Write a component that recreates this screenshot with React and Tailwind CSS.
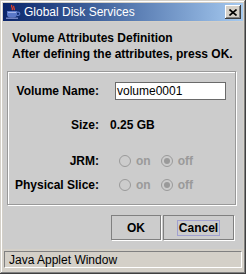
const font = { fontFamily: '"Liberation Sans", Arial, sans-serif' };

const JavaCup = () => (
  <svg width="16" height="16" viewBox="0 0 16 16">
    <path d="M7 1c-2 2 2 3 0 5M9 2c-1.5 1.5 1.5 2.5 0 4" stroke="#e8402a" strokeWidth="1.3" fill="none" />
    <path d="M2 7h10v3.5c0 2-1.5 3-3.5 3h-3C3.5 13.5 2 12.5 2 10.5z" fill="#5a78c8" />
    <path d="M3 8h8v1H3z" fill="#9fb2e8" />
    <path d="M12 8.2h1.2a1.6 1.6 0 010 3.2H12" stroke="#5a78c8" strokeWidth="1.2" fill="none" />
    <path d="M1 14.2h12" stroke="#8a9ad8" strokeWidth="1.2" />
  </svg>
);

const Radio = ({ checked, label }) => (
  <div className="flex items-center">
    <div className="w-[12px] h-[12px] rounded-full border border-[#9a9a9a] flex items-center justify-center">
      {checked && <div className="w-[6px] h-[6px] rounded-full bg-[#9a9a9a]" />}
    </div>
    <span className="ml-[5px] text-[12px] font-bold text-[#9a9a9a] leading-none">{label}</span>
  </div>
);

const RadioRow = ({ label, className }) => (
  <div className={`flex items-center h-[18px] ${className}`}>
    <span className="w-[90px] text-right font-bold text-[12px] text-black">{label}</span>
    <div className="ml-[20px] flex items-center gap-[10px]">
      <Radio label="on" />
      <Radio checked label="off" />
    </div>
  </div>
);

export default function App() {
  return (
    <div
      style={font}
      className="w-[246px] h-[274px] bg-[#d4d0c8] p-[3px] flex flex-col shadow-[inset_-1px_-1px_0_#404040,inset_1px_1px_0_#d4d0c8,inset_-2px_-2px_0_#808080,inset_2px_2px_0_#ffffff]"
    >
      <div className="h-[18px] flex items-center bg-gradient-to-r from-[#0a246a] to-[#a6caf0] pl-[2px] pr-[2px]">
        <JavaCup />
        <span className="ml-[3px] text-[12px] text-white leading-none flex-1">Global Disk Services</span>
        <div className="w-[16px] h-[14px] bg-[#d4d0c8] flex items-center justify-center shadow-[inset_-1px_-1px_0_#404040,inset_1px_1px_0_#ffffff,inset_-2px_-2px_0_#808080]">
          <svg width="8" height="7" viewBox="0 0 8 7">
            <path d="M0.5 0.5l7 6M7.5 0.5l-7 6" stroke="#000" strokeWidth="1.6" />
          </svg>
        </div>
      </div>

      <div className="mt-px bg-[#cccccc] h-[227px] flex flex-col">
        <div className="pl-[9px] pt-[8px] text-[12px] font-bold leading-[16px] text-black">
          <div>Volume Attributes Definition</div>
          <div>After defining the attributes, press OK.</div>
        </div>

        <div className="ml-[4px] mt-[9px] w-[229px] h-[134px] border border-[#999999] shadow-[inset_1px_1px_0_#ffffff,1px_1px_0_#ffffff] px-[1px] pt-[10px]">
          <div className="flex items-center h-[18px]">
            <span className="w-[90px] text-right font-bold text-[12px] text-black">Volume Name:</span>
            <div className="ml-[16px] w-[111px] h-[18px] bg-white border border-[#6a6a6a] flex items-center pl-[1px] text-[12px] text-black">
              volume0001
            </div>
          </div>
          <div className="flex items-center h-[18px] mt-[16px]">
            <span className="w-[90px] text-right font-bold text-[12px] text-black">Size:</span>
            <span className="ml-[11px] font-bold text-[12px] text-black">0.25 GB</span>
          </div>
          <RadioRow label="JRM:" className="mt-[18px]" />
          <RadioRow label="Physical Slice:" className="mt-[6px]" />
        </div>

        <div className="flex justify-end gap-[2px] mt-[10px] pr-[9px]">
          <button className="w-[50px] h-[25px] border border-[#808080] shadow-[1px_1px_0_#ffffff] bg-[#cccccc] text-[12px] font-bold text-black">
            OK
          </button>
          <button className="w-[71px] h-[25px] border border-[#808080] shadow-[1px_1px_0_#ffffff] bg-[#cccccc] text-[12px] font-bold text-black flex items-center justify-center">
            <span className="border border-[#a0a0d0] px-[1px] leading-[14px]">Cancel</span>
          </button>
        </div>
      </div>

      <div className="flex-1 pt-[2px] px-[1px]">
        <div className="h-[17px] border border-t-[#808080] border-l-[#808080] border-r-[#ffffff] border-b-[#ffffff] flex items-center pl-[4px] text-[12px] text-black">
          Java Applet Window
        </div>
      </div>
    </div>
  );
}
